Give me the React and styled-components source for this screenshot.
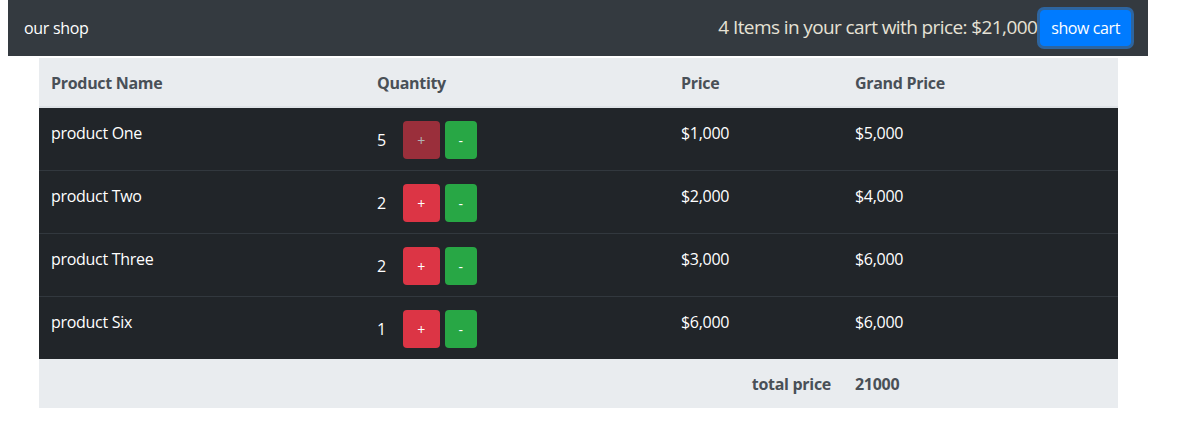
import React from "react";
import styled, { createGlobalStyle } from "styled-components";

const Global = createGlobalStyle`
  html, body { margin: 0; padding: 0; background: #fff; }
  body { font-family: "Open Sans", "Noto Sans", sans-serif; font-size: 16px; line-height: 1.5; color: #212529; letter-spacing: -0.3px; }
  #root { padding: 0 8px; }
`;

const Nav = styled.nav`
  display: flex;
  align-items: center;
  justify-content: space-between;
  height: 56px;
  padding: 0 16px 1px;
  box-sizing: border-box;
  width: 1140px;
  background: #343a40;
`;

const Brand = styled.span`
  color: #fff;
  font-size: 16px;
`;

const NavRight = styled.div`
  display: flex;
  align-items: center;
`;

const CartText = styled.span`
  color: #e6e2d6;
  font-size: 19px;
  letter-spacing: -0.6px;
`;

const BlueButton = styled.button`
  font-family: inherit;
  font-size: 16px;
  letter-spacing: -0.4px;
  line-height: 24px;
  color: #fff;
  background: #007bff;
  border: 1px solid #007bff;
  border-radius: 4px;
  padding: 5px 10px;
  box-shadow: 0 0 0 3px rgba(38, 143, 255, 0.5);
  margin-left: 3px;
  margin-right: 1px;
`;

const Wrap = styled.div`
  width: 1140px;
  padding: 2px 30px 0 31px;
  box-sizing: border-box;
`;

const Table = styled.table`
  width: 100%;
  table-layout: fixed;
  border-collapse: collapse;
  background: #212529;
  color: #fff;
`;

const HeadCell = styled.th`
  box-sizing: border-box;
  background: #e9ecef;
  color: #495057;
  font-weight: 700;
  text-align: left;
  padding: 13px 12px 11px;
  border-bottom: 2px solid #dee2e6;
  width: ${(p) => p.$w}px;
`;

const Row = styled.tr`
  border-top: 1px solid #32383e;
  &:first-child { border-top: none; }
`;

const Cell = styled.td`
  padding: 13px 12px 11px;
  vertical-align: top;
`;

const Qty = styled.span`
  display: inline-block;
  margin-right: 17px;
`;

const SmallButton = styled.button`
  font-family: inherit;
  font-size: 14px;
  line-height: 24px;
  height: 38px;
  width: ${(p) => p.$w}px;
  color: #fff;
  border: 1px solid transparent;
  border-radius: 4px;
  padding: 7px 0 5px;
  margin-right: 5px;
  vertical-align: baseline;
  background: ${(p) => p.$bg};
  opacity: ${(p) => (p.disabled ? 0.65 : 1)};
`;

const FootCell = styled.td`
  background: #e9ecef;
  color: #495057;
  font-weight: 700;
  padding: 13px 12px 12px;
  text-align: ${(p) => (p.$right ? "right" : "left")};
`;

const items = [
  { name: "product One", qty: 5, price: "$1,000", total: "$5,000", disabled: true },
  { name: "product Two", qty: 2, price: "$2,000", total: "$4,000" },
  { name: "product Three", qty: 2, price: "$3,000", total: "$6,000" },
  { name: "product Six", qty: 1, price: "$6,000", total: "$6,000" },
];

export default function App() {
  return (
    <>
      <Global />
      <Nav>
        <Brand>our shop</Brand>
        <NavRight>
          <CartText>4 Items in your cart with price: $21,000</CartText>
          <BlueButton>show cart</BlueButton>
        </NavRight>
      </Nav>
      <Wrap>
        <Table>
          <thead>
            <tr>
              <HeadCell $w={326}>Product Name</HeadCell>
              <HeadCell $w={304}>Quantity</HeadCell>
              <HeadCell $w={174}>Price</HeadCell>
              <HeadCell $w={275}>Grand Price</HeadCell>
            </tr>
          </thead>
          <tbody>
            {items.map((it) => (
              <Row key={it.name}>
                <Cell>{it.name}</Cell>
                <Cell>
                  <Qty>{it.qty}</Qty>
                  <SmallButton $bg="#dc3545" $w={37} disabled={it.disabled}>+</SmallButton>
                  <SmallButton $bg="#28a745" $w={32}>-</SmallButton>
                </Cell>
                <Cell>{it.price}</Cell>
                <Cell>{it.total}</Cell>
              </Row>
            ))}
          </tbody>
          <tfoot>
            <tr>
              <FootCell />
              <FootCell />
              <FootCell $right>total price</FootCell>
              <FootCell>21000</FootCell>
            </tr>
          </tfoot>
        </Table>
      </Wrap>
    </>
  );
}
